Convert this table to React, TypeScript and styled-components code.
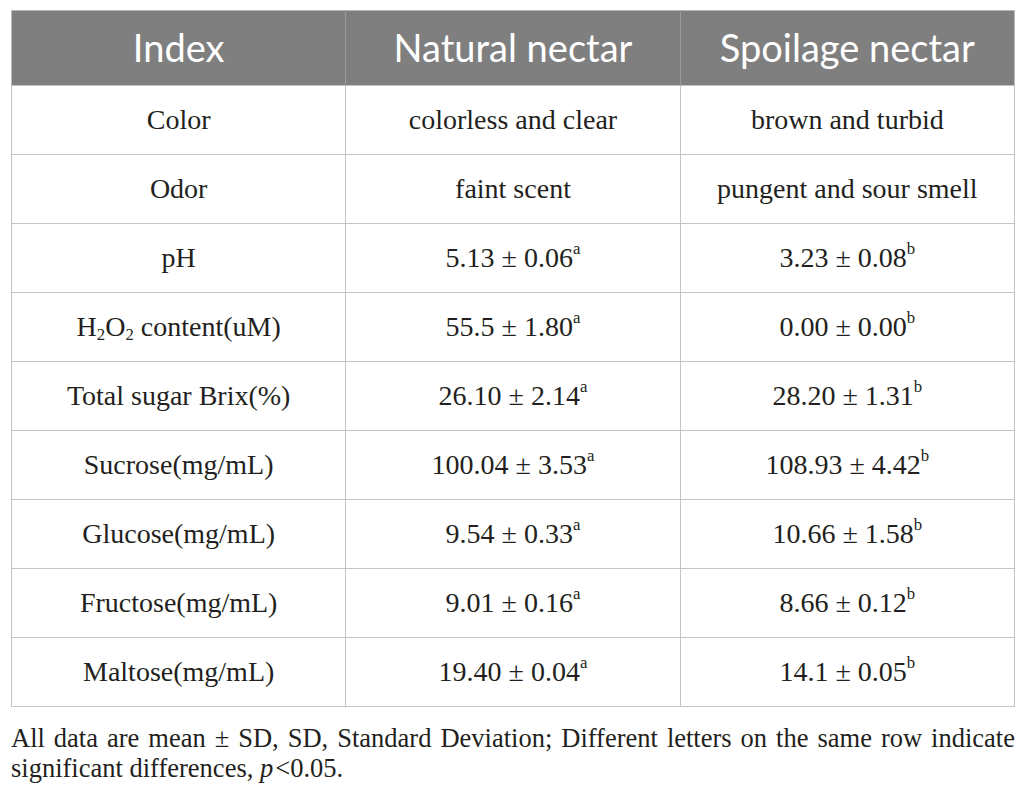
import React, { FC } from 'react';
import styled, { createGlobalStyle } from 'styled-components';

const GlobalStyle = createGlobalStyle`
  body {
    margin: 0;
    background: #fff;
  }
`;

const Page = styled.div`
  padding: 10px 11px 0 11px;
  width: 1004px;
  font-family: 'Liberation Serif', 'Times New Roman', serif;
  color: #231f20;
`;

const Table = styled.table`
  width: 100%;
  border-collapse: collapse;
  table-layout: fixed;
  border: 1px solid #b9b9b9;
  font-family: 'Liberation Serif', 'Times New Roman', serif;
  color: #231f20;
`;

const HeadCell = styled.th`
  height: 71px;
  padding: 0 0 3px 0;
  background: #7f7f7f;
  color: #fff;
  font-family: Lato, 'Open Sans', sans-serif;
  font-weight: 400;
  font-size: 38px;
  text-align: center;
  vertical-align: middle;
  border-left: 1px solid #9a9a9a;
  &:first-child {
    border-left: none;
  }
`;

const Cell = styled.td`
  height: 68px;
  padding: 0;
  font-size: 28px;
  text-align: center;
  vertical-align: middle;
  border: 1px solid #c4c4c4;
  white-space: nowrap;
`;

const Sup = styled.sup`
  font-size: 0.6em;
  line-height: 0;
  vertical-align: 0.75em;
`;

const Sub = styled.sub`
  font-size: 0.6em;
  line-height: 0;
  vertical-align: -0.25em;
`;

const Note = styled.p`
  margin: 16px 0 0 0;
  font-size: 26.5px;
  line-height: 30px;
  text-align: justify;
`;

const Em = styled.i`
  margin-right: 2px;
`;

type Row = { index: React.ReactNode; natural: React.ReactNode; spoil: React.ReactNode };

const val = (v: string, letter: string) => (
  <>
    {v}
    <Sup>{letter}</Sup>
  </>
);

const rows: Row[] = [
  { index: 'Color', natural: 'colorless and clear', spoil: 'brown and turbid' },
  { index: 'Odor', natural: 'faint scent', spoil: 'pungent and sour smell' },
  { index: 'pH', natural: val('5.13 ± 0.06', 'a'), spoil: val('3.23 ± 0.08', 'b') },
  {
    index: (
      <>
        H<Sub>2</Sub>O<Sub>2</Sub> content(uM)
      </>
    ),
    natural: val('55.5 ± 1.80', 'a'),
    spoil: val('0.00 ± 0.00', 'b'),
  },
  { index: 'Total sugar Brix(%)', natural: val('26.10 ± 2.14', 'a'), spoil: val('28.20 ± 1.31', 'b') },
  { index: 'Sucrose(mg/mL)', natural: val('100.04 ± 3.53', 'a'), spoil: val('108.93 ± 4.42', 'b') },
  { index: 'Glucose(mg/mL)', natural: val('9.54 ± 0.33', 'a'), spoil: val('10.66 ± 1.58', 'b') },
  { index: 'Fructose(mg/mL)', natural: val('9.01 ± 0.16', 'a'), spoil: val('8.66 ± 0.12', 'b') },
  { index: 'Maltose(mg/mL)', natural: val('19.40 ± 0.04', 'a'), spoil: val('14.1 ± 0.05', 'b') },
];

const App: FC = () => (
  <>
    <GlobalStyle />
    <Page>
      <Table>
        <thead>
          <tr>
            <HeadCell>Index</HeadCell>
            <HeadCell>Natural nectar</HeadCell>
            <HeadCell>Spoilage nectar</HeadCell>
          </tr>
        </thead>
        <tbody>
          {rows.map((r, i) => (
            <tr key={i}>
              <Cell>{r.index}</Cell>
              <Cell>{r.natural}</Cell>
              <Cell>{r.spoil}</Cell>
            </tr>
          ))}
        </tbody>
      </Table>
      <Note>
        All data are mean ± SD, SD, Standard Deviation; Different letters on the same row indicate
        significant differences, <Em>p</Em>&lt;0.05.
      </Note>
    </Page>
  </>
);

export default App;
